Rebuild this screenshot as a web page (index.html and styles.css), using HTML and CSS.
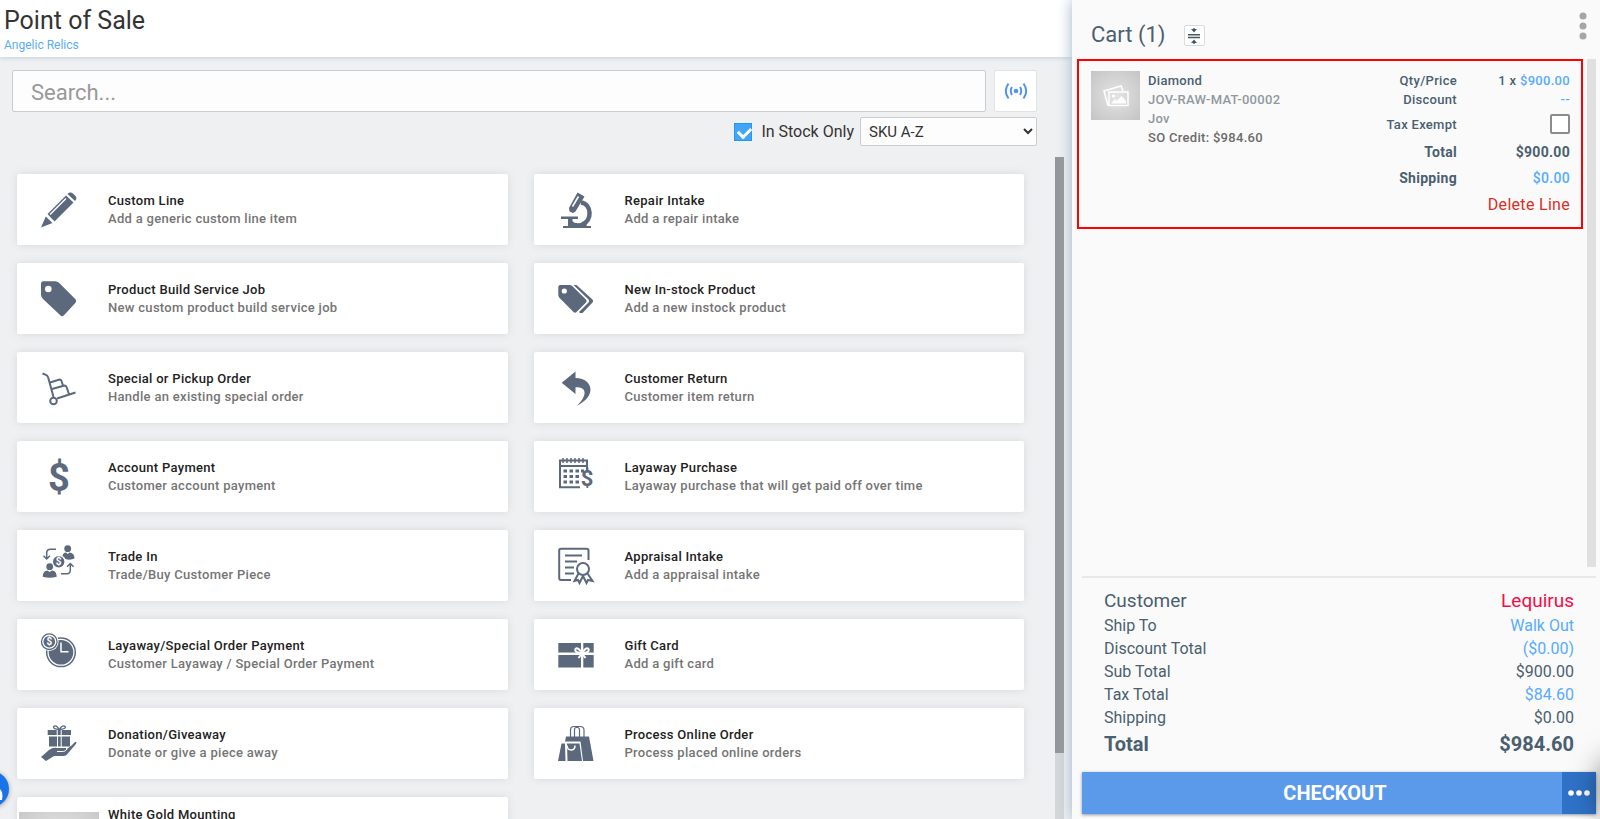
FILE: index.html
```html
<!doctype html>
<html lang="en">
  <head>
    <meta charset="UTF-8" />
    <meta name="viewport" content="width=device-width, initial-scale=1.0" />
    <title>Point of Sale</title>
    <link rel="stylesheet" href="styles.css">
  </head>
  <body>
    <div class="app">
      <!-- Catalog -->
      <main class="catalog">
        <header class="page-header">
          <h1>Point of Sale</h1>
          <a href="#">Angelic Relics</a>
        </header>

        <div class="search-area">
          <div class="search-row">
            <input class="search-input" type="text" placeholder="Search..." aria-label="Search">
            <button class="scan-button" type="button" aria-label="Scan">
              <svg width="24" height="18" viewBox="0 0 24 18" fill="none" stroke="#5294ea" stroke-width="2">
                <circle cx="12" cy="9" r="2.3" fill="#5294ea" stroke="none" />
                <path d="M8 5Q5.500 9 8 13M16 5Q18.500 9 16 13M4.500 1.500Q-1 9 4.500 16.500M19.500 1.500Q25 9 19.500 16.500" />
              </svg>
            </button>
          </div>
          <div class="filter-row">
            <input class="stock-check" type="checkbox" id="in-stock" checked>
            <label for="in-stock">In Stock Only</label>
            <select class="sort-select" aria-label="Sort by">
              <option>SKU A-Z</option>
              <option>SKU Z-A</option>
            </select>
          </div>
        </div>

        <div class="list-area">
          <div class="card-grid">
            <button class="card" type="button">
              <svg class="card-icon" viewBox="0 0 36 36">
                <path d="M0 35.500 4.800 24.500 11.500 31ZM6.500 22 25 3.500 32.500 10.500 13.500 29.500ZM26.500 2Q29-.500 32 1.500L34.500 4Q36.500 6.500 34 9Z" />
                <path d="M9 22.500 25 6.500" stroke="#fff" stroke-width="1.500" />
              </svg>
              <span class="card-text"><strong>Custom Line</strong><span>Add a generic custom line item</span></span>
            </button>

            <button class="card" type="button">
              <svg class="card-icon" viewBox="0 0 36 36">
                <path d="M5 34H33V36H5ZM3 24.500H20V27H3ZM10 27H14.500V34H10Z" />
                <path d="M23 10.500C34 12 34.500 29 24 32.500" fill="none" stroke="#5c697d" stroke-width="4.500" />
                <path d="M14 29Q18 33 26 30L29 34H10Z" />
                <path d="M19.500.500 26.500 4.500 17.500 19.500 15 21 11.500 19.500 11 16Z" />
                <path d="M20.500 4.500 14.500 14.500" stroke="#fff" stroke-width="1.500" />
              </svg>
              <span class="card-text"><strong>Repair Intake</strong><span>Add a repair intake</span></span>
            </button>

            <button class="card" type="button">
              <svg class="card-icon" viewBox="0 0 36 36">
                <path fill-rule="evenodd" d="M2.500.300H14.500Q16.500.300 18 1.800L34.500 18.300Q36 20 34.500 21.800L23 34.300Q21 36 19.300 34.300L2 18Q0 16 0 13.500V2.800Q0 .300 2.500.300ZM7.300 4.700A3.300 3.300 0 1 0 7.300 11.300A3.300 3.300 0 1 0 7.300 4.700Z" />
              </svg>
              <span class="card-text"><strong>Product Build Service Job</strong><span>New custom product build service job</span></span>
            </button>

            <button class="card" type="button">
              <svg class="card-icon" viewBox="0 0 36 36">
                <path fill-rule="evenodd" d="M2.300 4H11.500Q13 4 14.200 5L28 18.500Q29.300 20 28 21.500L18.500 31Q17 32.500 15.500 31L1.600 17Q.300 15.500.300 14V6Q.300 4 2.300 4ZM6.300 7.400A2.600 2.600 0 1 0 6.300 12.600A2.600 2.600 0 1 0 6.300 7.400Z" />
                <path d="M15.500 4H18.500L34.500 18.500Q36 20 34.500 21.500L24.500 32H22L21 31 30.500 21.500Q32 20 30.500 18.500Z" />
              </svg>
              <span class="card-text"><strong>New In-stock Product</strong><span>Add a new instock product</span></span>
            </button>

            <button class="card" type="button">
              <svg class="card-icon outline" viewBox="0 0 36 36">
                <path d="M1.500 3.500 5 4.800Q6.500 5.500 7.200 7.500L12.500 27M16 28.500 34.500 22.500" />
                <circle cx="12.500" cy="31" r="3.300" />
                <path d="M11 19 23.500 15.500Q25 15.500 25.500 17L28 24M9 12.500 18.500 9.500Q20 9.500 20.500 11L22 15.500" />
              </svg>
              <span class="card-text"><strong>Special or Pickup Order</strong><span>Handle an existing special order</span></span>
            </button>

            <button class="card" type="button">
              <svg class="card-icon" viewBox="0 0 36 36">
                <path d="M3.700 12.700 17.500 1.500V8C27 8 32.500 13 32.500 20C32 27 26 32 18.500 36C24 31 27 26 26.500 22C26 18.500 23 17.300 17.500 17.300V24Z" />
              </svg>
              <span class="card-text"><strong>Customer Return</strong><span>Customer item return</span></span>
            </button>

            <button class="card" type="button">
              <svg class="card-icon" viewBox="0 0 36 36">
                <text class="symbol-large" x="18" y="32">$</text>
              </svg>
              <span class="card-text"><strong>Account Payment</strong><span>Customer account payment</span></span>
            </button>

            <button class="card" type="button">
              <svg class="card-icon outline" viewBox="0 0 36 36">
                <path d="M22 28.300H2V1.500H29V12M2 7H29" />
                <path d="M5-1V4M9-1V4M13-1V4M17-1V4M21-1V4M25-1V4" stroke-width="1.500" />
                <path d="M5.500 12H9M11.500 12H15M17.500 12H21M23 12H26M5.500 17.500H9M11.500 17.500H15M17.500 17.500H21M5.500 23H9M11.500 23H15M17.500 23H21" stroke-width="3" />
                <text class="symbol-medium" x="29" y="27">$</text>
              </svg>
              <span class="card-text"><strong>Layaway Purchase</strong><span>Layaway purchase that will get paid off over time</span></span>
            </button>

            <button class="card" type="button">
              <svg class="card-icon" viewBox="0 0 36 36">
                <circle cx="26.700" cy=".700" r="3.400" />
                <path d="M21.500 8Q22 4.500 25 4.500L26.700 6 28.500 4.500Q33.500 5 33.500 10.500Q29 12.500 24.500 11Q23.500 9 21.500 8Z" />
                <circle cx="8.700" cy="18.700" r="3.400" />
                <path d="M1.700 28.700Q1.700 23 6.500 22.500L8.700 24 11 22.500Q15.700 23 15.700 28.700Q8.700 31 1.700 28.700Z" />
                <circle cx="17.700" cy="13.700" r="5.700" />
                <text class="symbol-coin" x="17.700" y="17.200">$</text>
                <path d="M15 1.300H9.500Q5.700 1.300 5.700 5V11M2.500 7.800 5.700 11 9 7.800M20 25.700H26Q29.300 25.700 29.300 22V15.500M26 18.700 29.300 15.500 32.600 18.700" fill="none" stroke="#5c697d" stroke-width="1.500" />
              </svg>
              <span class="card-text"><strong>Trade In</strong><span>Trade/Buy Customer Piece</span></span>
            </button>

            <button class="card" type="button">
              <svg class="card-icon outline" viewBox="0 0 36 36">
                <path d="M13 32H3Q1.200 32 1.200 30V2.500Q1.200.700 3 .700H28.500Q30.500.700 30.500 2.500V12M7 7.500H24M7 13.500H19M7 19.500H16M7 25.500H16" />
                <circle cx="25" cy="21" r="6" />
                <path d="M20.500 25.500 16.500 33 20 32 21.500 35 25 28 28.500 35 30 32 34.500 33 29.500 25.500" />
              </svg>
              <span class="card-text"><strong>Appraisal Intake</strong><span>Add a appraisal intake</span></span>
            </button>

            <button class="card" type="button">
              <svg class="card-icon" viewBox="0 0 36 36">
                <circle cx="20" cy="15.300" r="14.300" fill="none" stroke="#5c697d" stroke-width="1.500" />
                <circle cx="20" cy="15.300" r="12.300" />
                <path d="M20 5.500V14.800H27.500" fill="none" stroke="#fff" stroke-width="1.500" />
                <circle cx="8.300" cy="4.700" r="9.300" fill="#fff" />
                <circle cx="8.300" cy="4.700" r="7.800" fill="none" stroke="#5c697d" stroke-width="1.300" />
                <circle cx="8.300" cy="4.700" r="5.800" />
                <text class="symbol-coin" x="8.300" y="8.200">$</text>
              </svg>
              <span class="card-text"><strong>Layaway/Special Order Payment</strong><span>Customer Layaway / Special Order Payment</span></span>
            </button>

            <button class="card" type="button">
              <svg class="card-icon" viewBox="0 0 36 36">
                <path d="M.300 6H23V15.500H.300ZM25.300 6H35.700V15.500H25.300ZM.300 18H23V30.500H.300ZM25.300 18H35.700V30.500H25.300Z" />
                <path d="M24 16.500Q16 15.500 17.500 12Q20 9.500 24 16.500Q28 9.500 30.500 12Q32 15.500 24 16.500M24 16.500 20.500 21M24 16.500 27.500 21" fill="none" stroke="#fff" stroke-width="2" />
              </svg>
              <span class="card-text"><strong>Gift Card</strong><span>Add a gift card</span></span>
            </button>

            <button class="card" type="button">
              <svg class="card-icon" viewBox="0 0 36 36">
                <path d="M6.700 4H15.700V9H6.700ZM20.700 4H30V9H20.700ZM16.700 4H19.700V9H16.700ZM8 10.500H16V20.500H8ZM20.700 10.500H29V20.500H20.700ZM17 10.500H19.700V20.500H17Z" />
                <path d="M18.300 3.500Q12 3 12.500 1Q15-2 18.300 3.500Q21.500-2 24.500 1Q24.500 3 18.300 3.500" fill="none" stroke="#5c697d" stroke-width="1.300" />
                <path d="M0 31 8 24Q12 21 16 22H25Q26 23.500 24 24.500L30.500 19.500 34 16Q36 15.500 35.300 17.500L26 28.500Q24.500 30 22 30H13L5 35Z" />
                <path d="M16 25.500H22.500Q25 25 26 23" fill="none" stroke="#fff" />
              </svg>
              <span class="card-text"><strong>Donation/Giveaway</strong><span>Donate or give a piece away</span></span>
            </button>

            <button class="card" type="button">
              <svg class="card-icon" viewBox="0 0 36 36">
                <path d="M8 10.500H31L35.500 35H25L22.500 15.500H7ZM3.500 17.500 7 17.500 7.500 35H0ZM9 17.500H21.500L24 35H9.500Z" />
                <path d="M12.500 11V4Q12.500.500 16 .500H22Q26 .500 26 4V11M16.500 11V4Q16.500 1.500 18 1.500Q21.500 1 21.500 4V11" fill="none" stroke="#5c697d" stroke-width="1.200" />
                <path d="M9 19.500Q9.500 24 13 24Q17 24 17 19.500" fill="none" stroke="#fff" stroke-width="1.500" />
              </svg>
              <span class="card-text"><strong>Process Online Order</strong><span>Process placed online orders</span></span>
            </button>

            <button class="card product" type="button">
              <span class="product-image"></span>
              <span class="card-text"><strong>White Gold Mounting</strong></span>
            </button>
          </div>
          <div class="scroll-track"><div class="scroll-thumb"></div></div>
        </div>
      </main>

      <!-- Cart -->
      <aside class="cart">
        <header class="cart-header">
          <h2>Cart (1)</h2>
          <button class="collapse-button" type="button" aria-label="Collapse lines">
            <svg width="14" height="18" viewBox="0 0 14 18" fill="#455a64">
              <path d="M1 7H13V8.500H1ZM1 9.700H13V11.200H1ZM6.300 1H7.700V2H10L7 5.500 4 2H6.300ZM6.300 17H7.700V16H10L7 12.500 4 16H6.300Z" />
            </svg>
          </button>
          <button class="menu-button" type="button" aria-label="Cart menu">
            <svg width="8" height="28" viewBox="0 0 8 28" fill="#a6a6a6">
              <circle cx="4" cy="4" r="3.500" /><circle cx="4" cy="14" r="3.500" /><circle cx="4" cy="24" r="3.500" />
            </svg>
          </button>
        </header>

        <div class="cart-lines">
          <section class="cart-line">
            <div class="thumb">
              <svg width="26" height="22" viewBox="0 0 26 22" fill="none" stroke="#fff" stroke-width="1.500">
                <path d="M5 20.500 1 6 18 1 20 6" />
                <rect x="6" y="7" width="19" height="13.500" />
                <path d="M8 18.500 12 14 14 16 18.500 11 23 16V18.500Z" fill="#fff" stroke="none" />
                <circle cx="10.500" cy="11" r="1.500" fill="#fff" stroke="none" />
              </svg>
            </div>
            <div class="line-info">
              <div class="line-name">Diamond</div>
              <div class="line-muted">JOV-RAW-MAT-00002</div>
              <div class="line-muted">Jov</div>
              <div class="line-credit">SO Credit: $984.60</div>
            </div>
            <div class="line-amounts">
              <div class="amount-row"><span>Qty/Price</span><span>1 x <a href="#">$900.00</a></span></div>
              <div class="amount-row"><span>Discount</span><a href="#">--</a></div>
              <div class="amount-row tall"><label for="tax-exempt">Tax Exempt</label><input class="tax-check" type="checkbox" id="tax-exempt"></div>
              <div class="amount-row big"><span>Total</span><span>$900.00</span></div>
              <div class="amount-row big"><span>Shipping</span><a href="#">$0.00</a></div>
              <button class="delete-button" type="button">Delete Line</button>
            </div>
          </section>
          <div class="cart-track"></div>
        </div>

        <footer class="summary">
          <div class="summary-row customer"><span>Customer</span><a href="#">Lequirus</a></div>
          <div class="summary-row"><span>Ship To</span><a href="#">Walk Out</a></div>
          <div class="summary-row"><span>Discount Total</span><a href="#">($0.00)</a></div>
          <div class="summary-row"><span>Sub Total</span><span>$900.00</span></div>
          <div class="summary-row"><span>Tax Total</span><a href="#">$84.60</a></div>
          <div class="summary-row"><span>Shipping</span><span>$0.00</span></div>
          <div class="summary-row total"><span>Total</span><span>$984.60</span></div>
        </footer>

        <div class="checkout-bar">
          <button class="checkout-button" type="button">CHECKOUT</button>
          <button class="checkout-more" type="button" aria-label="More options">
            <svg width="22" height="6" viewBox="0 0 22 6" fill="#fff">
              <circle cx="3" cy="3" r="2.800" /><circle cx="11" cy="3" r="2.800" /><circle cx="19" cy="3" r="2.800" />
            </svg>
          </button>
        </div>
      </aside>
    </div>

    <!-- Floating widgets cut by the window edges -->
    <button class="help-bubble" type="button" aria-label="Help">
      <svg width="36" height="36" viewBox="0 0 36 36" fill="#fff">
        <path d="M18 9Q27 9 27 18L29 21Q30 25 29 29H8V18Q9 9 18 9Z" />
      </svg>
    </button>
    <div class="chat-shadow"></div>
  </body>
</html>
```
FILE: styles.css
```css
* {
  box-sizing: border-box;
}

body {
  margin: 0;
  font-family: Roboto, sans-serif;
  color: #4a5f70;
  background: #eff0f2;
  overflow: hidden;
}

button,
input,
select {
  font-family: inherit;
}

button {
  border: none;
  padding: 0;
  cursor: pointer;
}

a {
  color: #58acfa;
  text-decoration: none;
}

.app {
  display: grid;
  grid-template-columns: minmax(0, 1fr) 33%;
  height: 100vh;
}

/* Catalog */
.catalog {
  display: flex;
  flex-direction: column;
  min-height: 0;
}

.page-header {
  height: 57px;
  padding: 5px 4px;
  background: #fff;
  box-shadow: 0 1px 4px #c3d0da;
}

.page-header h1 {
  margin: 0;
  font-size: 25px;
  line-height: 32px;
  font-weight: 400;
  color: #333;
}

.page-header a {
  display: block;
  font-size: 12px;
  line-height: 16px;
}

.search-area {
  padding: 13px 35px 0 12px;
}

.search-row {
  display: flex;
  gap: 8px;
}

.search-input {
  flex: 1;
  height: 42px;
  padding: 2px 18px 0;
  border: 1px solid #ccc;
  border-radius: 2px;
  background: #fdfdfd;
  font-size: 22px;
}

.search-input::placeholder {
  color: #999;
}

.scan-button {
  display: flex;
  align-items: center;
  justify-content: center;
  width: 43px;
  height: 42px;
  border: 1px solid #dfe3e6;
  border-radius: 2px;
  background: #fff;
}

.filter-row {
  display: flex;
  align-items: center;
  justify-content: flex-end;
  margin-top: 5px;
  color: #333;
}

.stock-check {
  appearance: none;
  position: relative;
  width: 18px;
  height: 18px;
  margin: 0 9px 0 0;
  border: 1px solid #2196f3;
  background: #42a5f5;
}

.stock-check:checked::after {
  content: "";
  position: absolute;
  left: 3px;
  top: 3px;
  width: 10px;
  height: 6px;
  border-left: 3px solid #fff;
  border-bottom: 3px solid #fff;
  transform: rotate(-45deg);
}

.filter-row label {
  margin-right: 6px;
  font-size: 16px;
}

.sort-select {
  width: 177px;
  height: 29px;
  padding: 1px 4px 0;
  border: 1px solid #ccc;
  border-radius: 2px;
  background: #fdfdfd;
  font-size: 15px;
  color: #333;
}

/* Card list */
.list-area {
  display: flex;
  flex: 1;
  min-height: 0;
  margin-top: 11px;
  padding-right: 8px;
}

.card-grid {
  display: grid;
  grid-template-columns: 1fr 1fr;
  grid-auto-rows: 71px;
  gap: 18px 26px;
  flex: 1;
  padding: 17px 31px 0 17px;
  overflow: hidden;
}

.card {
  display: flex;
  align-items: center;
  padding: 0 24px;
  border-radius: 2px;
  background: #fff;
  box-shadow: 0 0 8px #d6d9dc;
  text-align: left;
}

.card-icon {
  width: 36px;
  height: 36px;
  margin-right: 31px;
  fill: #5c697d;
  overflow: visible;
}

.card-icon.outline {
  fill: none;
  stroke: #5c697d;
  stroke-width: 2;
}

.card-icon text {
  font-weight: 700;
  text-anchor: middle;
}

.symbol-large {
  font-size: 38px;
}

.symbol-medium {
  font-size: 22px;
  fill: #5c697d;
  stroke: none;
}

.symbol-coin {
  font-size: 10px;
  fill: #fff;
}

.card-text {
  display: flex;
  flex-direction: column;
  font-size: 13px;
  line-height: 18px;
  font-weight: 500;
  letter-spacing: 0.3px;
  color: #757575;
}

.card-text strong {
  font-weight: 500;
  color: #222;
}

.card.product {
  align-items: flex-start;
  height: 120px;
  padding: 0 2px;
}

.product .card-text {
  padding-top: 9px;
}

.product-image {
  width: 80px;
  height: 80px;
  margin: 15px 9px 0 0;
  background: radial-gradient(#eee, #c8c8c8);
}

.scroll-track {
  width: 9px;
  background: #d5d7d9;
}

.scroll-thumb {
  height: 90%;
  background: #949699;
}

/* Cart */
.cart {
  display: flex;
  flex-direction: column;
  min-height: 0;
  padding: 0 4px 5px 5px;
  background: #fafafa;
  box-shadow: 0 0 14px #9fb4c6;
  z-index: 1;
}

.cart-header {
  display: flex;
  align-items: flex-start;
  height: 59px;
  padding: 12px 9px 0 14px;
}

.cart-header h2 {
  margin: 9px 18px 0 0;
  font-size: 22px;
  line-height: 28px;
  font-weight: 400;
}

.collapse-button {
  display: flex;
  align-items: center;
  justify-content: center;
  width: 21px;
  height: 21px;
  margin-top: 13px;
  border: 1px solid #d8dcdf;
  border-radius: 2px;
  background: #fff;
}

.menu-button {
  margin-left: auto;
  background: none;
}

.cart-lines {
  display: flex;
  flex: 1;
  align-items: flex-start;
  gap: 4px;
  min-height: 0;
}

.cart-line {
  display: flex;
  flex: 1;
  padding: 10px 11px 8px 12px;
  border: 2px solid #f00;
  font-size: 13px;
  line-height: 19px;
  font-weight: 500;
  letter-spacing: 0.3px;
}

.thumb {
  display: flex;
  align-items: center;
  justify-content: center;
  width: 49px;
  height: 49px;
  margin-right: 8px;
  background: radial-gradient(#e4e4e4, #c4c4c4);
}

.line-muted {
  color: #90999f;
}

.line-credit {
  color: #6b6b6b;
}

.line-amounts {
  flex: 1;
  text-align: right;
}

.amount-row {
  display: grid;
  grid-template-columns: 1fr 113px;
  align-items: center;
}

.amount-row.tall {
  height: 30px;
}

.amount-row.big {
  font-size: 14px;
  line-height: 26px;
  font-weight: 700;
}

.amount-row.big a {
  font-weight: 500;
}

.tax-check {
  appearance: none;
  justify-self: end;
  width: 20px;
  height: 20px;
  margin: 0;
  border: 2px solid #8c8c8c;
  border-radius: 2px;
  background: #fff;
}

.delete-button {
  background: none;
  font-size: 16px;
  line-height: 28px;
  letter-spacing: 0.3px;
  color: #d93025;
}

.cart-track {
  align-self: stretch;
  width: 9px;
  margin-bottom: 9px;
  background: #e0e0e0;
}

.summary {
  margin-left: 5px;
  padding: 10px 22px 12px;
  border-top: 2px solid #e6e9ea;
  font-size: 16px;
}

.summary-row {
  display: flex;
  justify-content: space-between;
  line-height: 23px;
}

.summary-row.customer {
  font-size: 19px;
  line-height: 26px;
}

.customer a {
  color: #f50c46;
}

.summary-row.total {
  font-size: 20px;
  line-height: 31px;
  font-weight: 700;
}

.checkout-bar {
  display: flex;
  height: 42px;
  margin-left: 5px;
  box-shadow: 0 1px 3px #8b98a5;
}

.checkout-button {
  flex: 1;
  padding-left: 26px;
  background: #5b9aeb;
  font-size: 20px;
  font-weight: 700;
  color: #fff;
}

.checkout-more {
  display: flex;
  align-items: center;
  justify-content: center;
  width: 34px;
  background: #2f72c8;
}

/* Floating widgets */
.help-bubble {
  position: fixed;
  left: -27px;
  bottom: 12px;
  width: 36px;
  height: 36px;
  border-radius: 50%;
  background: #1a73e8;
  box-shadow: 0 1px 5px #a0a0a0;
  z-index: 2;
}

.chat-shadow {
  position: fixed;
  right: -40px;
  bottom: 0;
  width: 40px;
  height: 60px;
  border-radius: 30px;
  box-shadow: 0 0 30px rgba(0, 0, 0, 0.5);
  pointer-events: none;
  z-index: 2;
}
```
